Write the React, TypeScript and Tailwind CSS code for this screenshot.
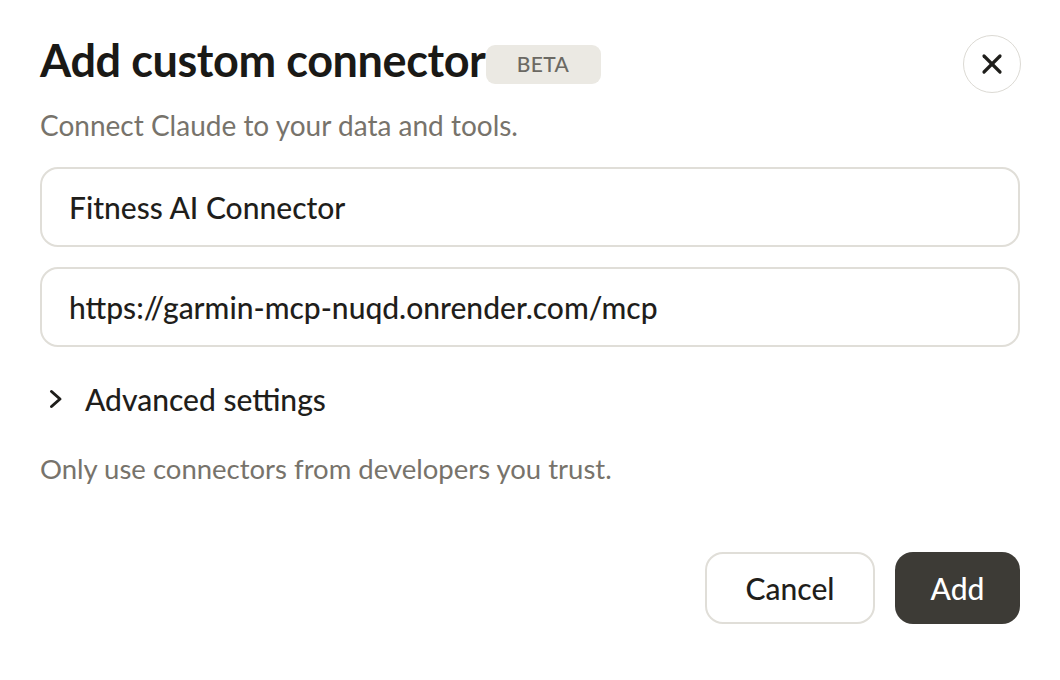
import { X } from 'lucide-react';

const font = { fontFamily: 'Lato, "Noto Sans", sans-serif' };

export default function App() {
  return (
    <div style={font} className="w-[1060px] h-[680px] bg-white px-10 pt-[35px] text-[#1f1e1b]">
      {/* Header */}
      <div className="flex items-center justify-between">
        <div className="flex items-center">
          <h1 className="pb-2 text-[45px] font-bold leading-[50px] tracking-[-0.4px] text-[#1a1916]">Add custom connector</h1>
          <span className="flex h-[39px] w-[115px] items-center justify-center rounded-[9px] bg-[#ebe9e3] text-[21px] font-medium tracking-[0.3px] text-[#6b6963]">
            BETA
          </span>
        </div>
        <button className="mr-[-1px] flex h-[58px] w-[58px] items-center justify-center rounded-full border-[1.5px] border-[#dcdad4]">
          <X size={32} strokeWidth={2.4} className="text-[#1f1e1b]" />
        </button>
      </div>

      <p className="mt-[14px] text-[28px] leading-9 text-[#77736b]">Connect Claude to your data and tools.</p>

      {/* Fields */}
      <div className="mt-6 flex flex-col gap-5">
        <div className="flex h-20 items-center rounded-[18px] border-2 border-[#e0ded8] px-[27px] text-[30px] font-medium">
          Fitness AI Connector
        </div>
        <div className="flex h-20 items-center rounded-[18px] border-2 border-[#e0ded8] px-[27px] text-[30px] font-medium">
          https://garmin-mcp-nuqd.onrender.com/mcp
        </div>
      </div>

      <div className="mt-[34px] flex h-9 items-center gap-[22px] pl-[9px] text-[30px] font-medium">
        <svg width="14" height="20" viewBox="0 0 14 20" fill="none" stroke="currentColor" strokeWidth="3" strokeLinecap="round" strokeLinejoin="round">
          <path d="M2.5 2.5 L11 10 L2.5 17.5" />
        </svg>
        <span>Advanced settings</span>
      </div>

      <p className="mt-[34px] text-[27.5px] leading-9 text-[#77736b]">Only use connectors from developers you trust.</p>

      {/* Actions */}
      <div className="mt-[65px] flex justify-end gap-5">
        <button className="h-[72px] w-[170px] rounded-[18px] border-2 border-[#e0ded8] text-[30px] font-medium text-[#1f1e1b]">
          Cancel
        </button>
        <button className="h-[72px] w-[125px] rounded-[18px] bg-[#3d3b36] text-[30px] font-medium text-white">Add</button>
      </div>
    </div>
  );
}
